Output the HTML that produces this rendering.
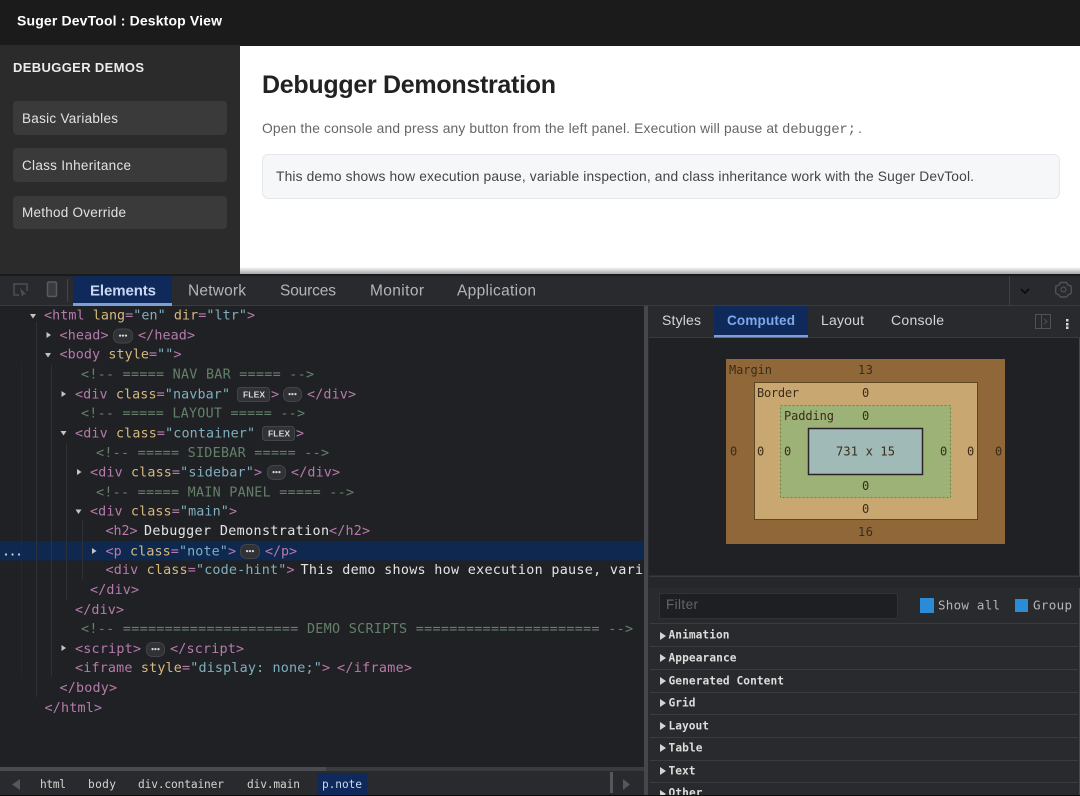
<!DOCTYPE html>
<html lang="en">
<head>
<meta charset="utf-8">
<title>Suger DevTool : Desktop View</title>
<style>
html,body{margin:0;padding:0;width:1080px;height:796px;overflow:hidden;background:#202124}
svg{display:block;filter:blur(.3px)}
text{white-space:pre}
.s{font-family:"Liberation Sans",sans-serif}
.m{font-family:"DejaVu Sans Mono","Liberation Mono",monospace;font-size:13.4px}
.t{fill:#b57bab}.a{fill:#d6b97f}.v{fill:#7fb0bf}.c{fill:#64806a}.w{fill:#e4e4e4}
.bm{font-family:"DejaVu Sans Mono",monospace;font-size:12px;fill:#3b2c18}
.row{font-family:"DejaVu Sans Mono",monospace;font-size:11.2px;font-weight:bold;fill:#dcdcdc}
.crumb{font-family:"DejaVu Sans Mono",monospace;font-size:11.2px;fill:#d4d4d4}
.tab{font-family:"Liberation Sans",sans-serif;font-size:15.5px;fill:#b4b5b8}
.rt{font-family:"Liberation Sans",sans-serif;font-size:14px;fill:#d4d5d8}
.b{fill:#303236;stroke:#434549;stroke-width:1}
.dots{font-family:"DejaVu Sans",sans-serif;font-size:6.5px;font-weight:bold;fill:#d8d8d8}
.fl{font-family:"Liberation Sans",sans-serif;font-size:8.5px;font-weight:bold;fill:#d8d8d8}
.ar{fill:#c4c4c4}.g{stroke:#2e3035;stroke-width:1}.l{stroke:#3a3b3f;stroke-width:1}
</style>
</head>
<body>
<svg width="1080" height="796" viewBox="0 0 1080 796" xmlns="http://www.w3.org/2000/svg">
<defs>
<linearGradient id="sh" x1="0" y1="0" x2="0" y2="1"><stop offset="0" stop-color="#000" stop-opacity="0"/><stop offset="1" stop-color="#000" stop-opacity=".4"/></linearGradient>
<clipPath id="cl"><rect x="0" y="306" width="644" height="462"/></clipPath>
<clipPath id="cb"><rect x="650" y="576" width="430" height="219"/></clipPath>
</defs>

<!-- page -->
<rect width="1080" height="796" fill="#202124"/>
<rect x="0" y="0" width="1080" height="46" fill="#1b1b1b"/>
<text class="s" x="17" y="25.5" font-size="14" font-weight="bold" fill="#fff" textLength="205">Suger DevTool : Desktop View</text>
<rect x="0" y="45" width="240" height="230" fill="#2b2b2b"/>
<rect x="240" y="46" width="840" height="229" fill="#fff"/>
<text class="s" x="13" y="72" font-size="13" font-weight="bold" fill="#ececec" textLength="131">DEBUGGER DEMOS</text>
<rect x="13" y="101" width="214" height="34" rx="4" fill="#3a3a3a"/>
<rect x="13" y="148" width="214" height="34" rx="4" fill="#3a3a3a"/>
<rect x="13" y="196" width="214" height="33" rx="4" fill="#3a3a3a"/>
<text class="s" x="22" y="123" font-size="13.5" fill="#e2e2e2" textLength="96">Basic Variables</text>
<text class="s" x="22" y="170" font-size="13.5" fill="#e2e2e2" textLength="109">Class Inheritance</text>
<text class="s" x="22" y="217" font-size="13.5" fill="#e2e2e2" textLength="104">Method Override</text>

<text class="s" x="262" y="93" font-size="25" font-weight="bold" fill="#222" textLength="294">Debugger Demonstration</text>
<text class="s" x="262" y="133" font-size="13.8" fill="#666" textLength="516">Open the console and press any button from the left panel. Execution will pause at</text>
<text x="782" y="133" font-family="Liberation Mono,monospace" font-size="14" fill="#666" textLength="74">debugger;</text>
<text class="s" x="858" y="133" font-size="14" fill="#666">.</text>
<rect x="262.5" y="154.5" width="797" height="44" rx="6" fill="#f6f7f9" stroke="#e5e7eb"/>
<text class="s" x="276" y="181" font-size="13.8" fill="#444" textLength="698">This demo shows how execution pause, variable inspection, and class inheritance work with the Suger DevTool.</text>
<rect x="240" y="267" width="840" height="8" fill="url(#sh)"/>

<!-- devtools toolbar -->
<rect x="0" y="274" width="1080" height="2" fill="#1a1b1d"/>
<rect x="0" y="276" width="1080" height="30" fill="#292a2d"/>
<rect x="0" y="305" width="1080" height="1" fill="#3a3b3f"/>
<path d="M19 295H14V284H27V291" fill="none" stroke="#4c4e52" stroke-width="1.5"/>
<path d="M20 288l6 6-2.500 .5 -1.500 2.500z" fill="#4c4e52"/>
<rect x="47.500" y="282" width="9" height="14.500" rx="1.500" fill="#3a3b3e" stroke="#595b5f" stroke-width="1.500"/>
<line x1="67.500" y1="279" x2="67.500" y2="302" stroke="#44464a"/>
<rect x="73" y="276" width="99" height="28" fill="#0f2a5a"/>
<rect x="73" y="303" width="99" height="3" fill="#7d9fd6"/>
<text class="s" x="90" y="295.500" font-size="15" font-weight="bold" fill="#c9d8f2" textLength="66">Elements</text>
<text class="tab" x="188" y="295.500" textLength="58">Network</text>
<text class="tab" x="280" y="295.500" textLength="56">Sources</text>
<text class="tab" x="370" y="295.500" textLength="54">Monitor</text>
<text class="tab" x="457" y="295.500" textLength="79">Application</text>
<line x1="1009.500" y1="276" x2="1009.500" y2="305" stroke="#3e4044"/>
<path d="M1021 289l4 4 4-4" fill="none" stroke="#0c0c0c" stroke-width="1.800"/>
<path d="M1060.500 282.500h6l1.500 2.500 3 1 .5 4.500-.5 3-3 1.500-1.500 2h-6l-1.500-2-3-1.500-.5-3 .5-4.500 3-1z" fill="none" stroke="#505256" stroke-width="1.400"/>
<circle cx="1063.500" cy="289.500" r="2.400" fill="none" stroke="#505256" stroke-width="1.300"/>

<!-- elements panel -->
<rect x="0" y="306" width="644" height="465" fill="#202124"/>
<rect x="0" y="541" width="644" height="19.500" fill="#0e2850"/>
<line x1="21.500" y1="365" x2="21.500" y2="677" stroke="#26282c"/>
<line class="g" x1="36.500" y1="322" x2="36.500" y2="697"/>
<line class="g" x1="51.500" y1="365" x2="51.500" y2="677"/>
<line class="g" x1="66.500" y1="443" x2="66.500" y2="600"/>
<line class="g" x1="82.500" y1="520" x2="82.500" y2="580"/>
<g clip-path="url(#cl)">
<text class="w" x="2" y="555.500" font-family="DejaVu Sans Mono,monospace" font-size="13.400" textLength="21">...</text>
<text class="m" x="44" y="319.500" textLength="211"><tspan class="t">&lt;html</tspan> <tspan class="a">lang</tspan><tspan class="t">=</tspan><tspan class="v">"en"</tspan> <tspan class="a">dir</tspan><tspan class="t">=</tspan><tspan class="v">"ltr"</tspan><tspan class="t">&gt;</tspan></text>
<text class="m t" x="59.500" y="339.500" textLength="49">&lt;head&gt;</text>
<rect class="b" x="113.500" y="329" width="19" height="14" rx="6"/><text class="dots" x="118" y="338" textLength="10">•••</text>
<text class="m t" x="138" y="339.500" textLength="57">&lt;/head&gt;</text>
<text class="m" x="59.500" y="358.500" textLength="122"><tspan class="t">&lt;body</tspan> <tspan class="a">style</tspan><tspan class="t">=</tspan><tspan class="v">""</tspan><tspan class="t">&gt;</tspan></text>
<text class="m c" x="81" y="378.500" textLength="233">&lt;!-- ===== NAV BAR ===== --&gt;</text>
<text class="m" x="75" y="398.500" textLength="155"><tspan class="t">&lt;div</tspan> <tspan class="a">class</tspan><tspan class="t">=</tspan><tspan class="v">"navbar"</tspan></text>
<rect class="b" x="237.500" y="387.500" width="32" height="14" rx="3"/><text class="fl" x="243" y="397.500" textLength="22">FLEX</text>
<text class="m t" x="271" y="398.500">&gt;</text>
<rect class="b" x="283.500" y="387.500" width="18" height="14" rx="6"/><text class="dots" x="287.500" y="396.500" textLength="10">•••</text>
<text class="m t" x="307" y="398.500" textLength="49">&lt;/div&gt;</text>
<text class="m c" x="81" y="417.500" textLength="224">&lt;!-- ===== LAYOUT ===== --&gt;</text>
<text class="m" x="75" y="437.500" textLength="180"><tspan class="t">&lt;div</tspan> <tspan class="a">class</tspan><tspan class="t">=</tspan><tspan class="v">"container"</tspan></text>
<rect class="b" x="262.500" y="426.500" width="32" height="14" rx="3"/><text class="fl" x="268" y="436.500" textLength="22">FLEX</text>
<text class="m t" x="296" y="437.500">&gt;</text>
<text class="m c" x="96" y="457" textLength="233">&lt;!-- ===== SIDEBAR ===== --&gt;</text>
<text class="m" x="90" y="476.500" textLength="172"><tspan class="t">&lt;div</tspan> <tspan class="a">class</tspan><tspan class="t">=</tspan><tspan class="v">"sidebar"</tspan><tspan class="t">&gt;</tspan></text>
<rect class="b" x="267.500" y="465.500" width="18" height="14" rx="6"/><text class="dots" x="271.500" y="474.500" textLength="10">•••</text>
<text class="m t" x="291" y="476.500" textLength="49">&lt;/div&gt;</text>
<text class="m c" x="96" y="496.500" textLength="258">&lt;!-- ===== MAIN PANEL ===== --&gt;</text>
<text class="m" x="90" y="515.500" textLength="147"><tspan class="t">&lt;div</tspan> <tspan class="a">class</tspan><tspan class="t">=</tspan><tspan class="v">"main"</tspan><tspan class="t">&gt;</tspan></text>
<text class="m t" x="105.500" y="535" textLength="32">&lt;h2&gt;</text>
<text class="m w" x="144" y="535" textLength="185">Debugger Demonstration</text>
<text class="m t" x="329" y="535" textLength="41">&lt;/h2&gt;</text>
<text class="m" x="105.500" y="555.500" textLength="130.500"><tspan class="t">&lt;p</tspan> <tspan class="a">class</tspan><tspan class="t">=</tspan><tspan class="v">"note"</tspan><tspan class="t">&gt;</tspan></text>
<rect class="b" x="240.500" y="544.500" width="19" height="14" rx="6"/><text class="dots" x="245" y="553.500" textLength="10">•••</text>
<text class="m t" x="265" y="555.500" textLength="32">&lt;/p&gt;</text>
<text class="m" x="105.500" y="574" textLength="189"><tspan class="t">&lt;div</tspan> <tspan class="a">class</tspan><tspan class="t">=</tspan><tspan class="v">"code-hint"</tspan><tspan class="t">&gt;</tspan></text>
<text class="m w" x="300.500" y="574" textLength="342.500">This demo shows how execution pause, vari</text>
<text class="m t" x="90" y="594" textLength="49">&lt;/div&gt;</text>
<text class="m t" x="75" y="614" textLength="49">&lt;/div&gt;</text>
<text class="m c" x="81" y="633" textLength="552">&lt;!-- ===================== DEMO SCRIPTS ====================== --&gt;</text>
<text class="m t" x="75" y="653" textLength="66">&lt;script&gt;</text>
<rect class="b" x="146.500" y="642.500" width="18" height="14" rx="6"/><text class="dots" x="150.500" y="651.500" textLength="10">•••</text>
<text class="m t" x="170" y="653" textLength="74">&lt;/script&gt;</text>
<text class="m" x="75" y="672" textLength="255"><tspan class="t">&lt;iframe</tspan> <tspan class="a">style</tspan><tspan class="t">=</tspan><tspan class="v">"display: none;"</tspan><tspan class="t">&gt;</tspan></text>
<text class="m t" x="337" y="672" textLength="75">&lt;/iframe&gt;</text>
<text class="m t" x="59.500" y="692" textLength="57.500">&lt;/body&gt;</text>
<text class="m t" x="44.500" y="712" textLength="57.500">&lt;/html&gt;</text>
</g>
<g class="ar">
<path d="M30 314h6l-3 4.500z"/>
<path d="M46.500 332l4.500 3-4.500 3z"/>
<path d="M45 353h6l-3 4.500z"/>
<path d="M61.500 391l4.500 3-4.500 3z"/>
<path d="M60.500 431h6l-3 4.500z"/>
<path d="M77 469l4.500 3-4.500 3z"/>
<path d="M75.500 509.500h6l-3 4.500z"/>
<path d="M92 548l4.500 3-4.500 3z"/>
<path d="M61.500 645l4.500 3-4.500 3z"/>
</g>

<!-- breadcrumbs -->
<rect x="0" y="767" width="644" height="4" fill="#3a3b3e"/>
<rect x="0" y="767" width="326" height="4" fill="#4a4b4e"/>
<rect x="0" y="771" width="644" height="24" fill="#292a2d"/>
<path d="M20 779v11l-8-5.500z" fill="#55575b"/>
<text class="crumb" x="40" y="788" textLength="26">html</text>
<text class="crumb" x="88" y="788" textLength="28">body</text>
<text class="crumb" x="138" y="788" textLength="86">div.container</text>
<text class="crumb" x="247" y="788" textLength="53">div.main</text>
<rect x="318" y="773" width="49" height="22" fill="#0f2a5a"/>
<text class="crumb" x="322" y="788" textLength="40" style="fill:#c9d8f2">p.note</text>
<rect x="610" y="772" width="3" height="21" fill="#55575b"/>
<path d="M623 779v11l7-5.500z" fill="#55575b"/>

<!-- splitter -->
<rect x="644" y="306" width="4" height="490" fill="#45474b"/>

<!-- right panel -->
<rect x="648" y="306" width="432" height="490" fill="#292a2d"/>
<rect x="649" y="338" width="431" height="238" fill="#202124"/>
<rect x="649" y="337" width="431" height="1" fill="#3a3b3f"/>
<rect x="714" y="306" width="94" height="30" fill="#0f2a5a"/>
<rect x="714" y="335" width="94" height="2.500" fill="#7d9fd6"/>
<text class="rt" x="662" y="325" textLength="39">Styles</text>
<text class="rt" x="727" y="325" textLength="68" style="fill:#7fa9ea;font-weight:bold;font-size:13.5px">Computed</text>
<text class="rt" x="821" y="325" textLength="43">Layout</text>
<text class="rt" x="891" y="325" textLength="53">Console</text>
<rect x="1035.500" y="314.500" width="15" height="14" fill="none" stroke="#505256"/>
<line x1="1041.500" y1="314.500" x2="1041.500" y2="328.500" stroke="#505256"/>
<path d="M1044 319l3 2.500-3 2.500" fill="none" stroke="#505256"/>
<rect x="1066" y="319" width="2.500" height="2.500" fill="#d8d8d8"/>
<rect x="1066" y="323" width="2.500" height="2.500" fill="#d8d8d8"/>
<rect x="1066" y="326.500" width="2.500" height="2.500" fill="#d8d8d8"/>
<rect x="1079" y="338" width="1" height="457" fill="#45474b"/>

<!-- box model -->
<rect x="726" y="359" width="279" height="185" fill="#8f6739"/>
<rect x="754.500" y="382.500" width="223" height="137" fill="#c8a771" stroke="#5d4622"/>
<rect x="780.500" y="405.500" width="170" height="92" fill="#9cb277" stroke="#628a42" stroke-dasharray="2 2"/>
<rect x="808.500" y="428.500" width="114" height="46" fill="#a0bab8" stroke="#2a2226" stroke-width="1.500"/>
<text class="bm" x="729" y="374" textLength="43">Margin</text>
<text class="bm" x="858" y="374" textLength="15">13</text>
<text class="bm" x="757" y="397" textLength="42">Border</text>
<text class="bm" x="862" y="397">0</text>
<text class="bm" x="784" y="420" textLength="50">Padding</text>
<text class="bm" x="862" y="420">0</text>
<text class="bm" x="836" y="455.500" textLength="59">731 x 15</text>
<text class="bm" x="730" y="455.500">0</text>
<text class="bm" x="757" y="455.500">0</text>
<text class="bm" x="784" y="455.500">0</text>
<text class="bm" x="940" y="455.500">0</text>
<text class="bm" x="967" y="455.500">0</text>
<text class="bm" x="995" y="455.500">0</text>
<text class="bm" x="862" y="490">0</text>
<text class="bm" x="862" y="513">0</text>
<text class="bm" x="858" y="536" textLength="15">16</text>

<!-- filter -->
<rect x="649" y="575.500" width="431" height="1.500" fill="#3a3b3f"/>
<rect x="649" y="577" width="431" height="11" fill="#26272a"/>
<rect x="659.500" y="593.500" width="238" height="25" rx="1" fill="#1e1f22" stroke="#303236"/>
<text class="s" x="666" y="609" font-size="13.500" fill="#63656a" textLength="32">Filter</text>
<rect x="920" y="598" width="14" height="15" fill="#2a8bd6"/>
<text x="938" y="609.500" font-family="DejaVu Sans Mono,monospace" font-size="12.500" fill="#b4b5b8" textLength="62">Show all</text>
<rect x="1015" y="599" width="13" height="13" fill="#2a8bd6"/>
<text x="1033" y="609.500" font-family="DejaVu Sans Mono,monospace" font-size="12.500" fill="#b4b5b8" textLength="39">Group</text>

<line class="l" x1="650" y1="623.500" x2="1078" y2="623.500"/>
<line class="l" x1="650" y1="646.500" x2="1078" y2="646.500"/>
<line class="l" x1="650" y1="669.500" x2="1078" y2="669.500"/>
<line class="l" x1="650" y1="692.500" x2="1078" y2="692.500"/>
<line class="l" x1="650" y1="714.500" x2="1078" y2="714.500"/>
<line class="l" x1="650" y1="737.500" x2="1078" y2="737.500"/>
<line class="l" x1="650" y1="760.500" x2="1078" y2="760.500"/>
<line class="l" x1="650" y1="782.500" x2="1078" y2="782.500"/>
<g clip-path="url(#cb)">
<g fill="#d4d4d4">
<path d="M660 632v8l6-4z"/><path d="M660 654v8l6-4z"/><path d="M660 677v8l6-4z"/><path d="M660 699v8l6-4z"/><path d="M660 722v8l6-4z"/><path d="M660 744v8l6-4z"/><path d="M660 767v8l6-4z"/><path d="M660 790v8l6-4z"/>
</g>
<text class="row" x="668.500" y="638.500" textLength="61">Animation</text>
<text class="row" x="668.500" y="661.500" textLength="68">Appearance</text>
<text class="row" x="668.500" y="684.500" textLength="115.500">Generated Content</text>
<text class="row" x="668.500" y="706.500" textLength="27">Grid</text>
<text class="row" x="668.500" y="729.500" textLength="40.500">Layout</text>
<text class="row" x="668.500" y="751.500" textLength="34">Table</text>
<text class="row" x="668.500" y="774.500" textLength="27">Text</text>
<text class="row" x="668.500" y="796.500" textLength="34">Other</text>
</g>
<rect x="0" y="795" width="1080" height="1" fill="#0a0a0a"/>
</svg>
</body>
</html>
